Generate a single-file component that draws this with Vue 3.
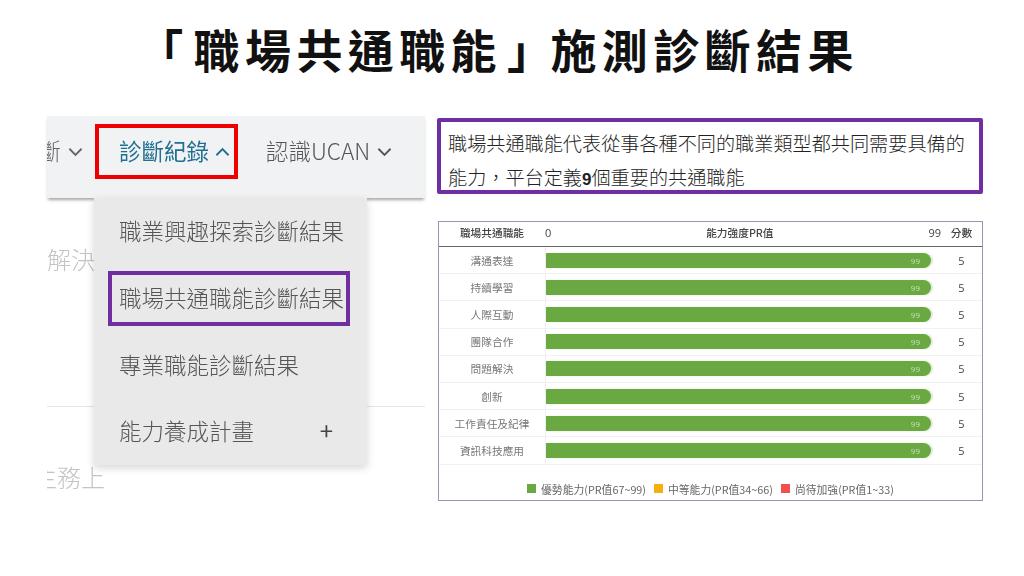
<script setup>
const rows = ['溝通表達', '持續學習', '人際互動', '團隊合作', '問題解決', '創新', '工作責任及紀律', '資訊科技應用']
const menu = ['職業興趣探索診斷結果', '職場共通職能診斷結果', '專業職能診斷結果', '能力養成計畫']
const legend = [
  { color: '#6aa842', text: '優勢能力(PR值67~99)' },
  { color: '#f5b010', text: '中等能力(PR值34~66)' },
  { color: '#f2504f', text: '尚待加強(PR值1~33)' }
]
</script>

<template>
  <div class="slide">
    <h1 class="title"><span class="open">「</span>職場共通職能<span class="close">」</span>施測診斷結果</h1>

    <div class="columns">
      <!-- website screenshot, left -->
      <div class="site">
        <nav class="nav">
          <span class="nav-item cut">斷<svg class="chev" viewBox="0 0 16 10"><path d="M1.500 1.500l6.500 6.500 6.500-6.500" /></svg></span>
          <span class="nav-item active">診斷紀錄<svg class="chev" viewBox="0 0 16 10"><path d="M1.500 8.500l6.500-6.500 6.500 6.500" /></svg></span>
          <span class="nav-item other">認識UCAN<svg class="chev" viewBox="0 0 16 10"><path d="M1.500 1.500l6.500 6.500 6.500-6.500" /></svg></span>
        </nav>

        <div class="behind">
          <div class="behind-top">解決</div>
          <div class="behind-line"></div>
          <div class="behind-bottom"><span>主務上</span></div>
        </div>

        <ul class="dropdown">
          <li v-for="(item, i) in menu" :key="item" class="drop-item" :class="{ marked: i === 1 }">
            <span>{{ item }}</span>
            <span v-if="i === 3" class="plus">+</span>
          </li>
        </ul>
      </div>

      <div class="right">
        <div class="note">
          <p>職場共通職能代表從事各種不同的職業類型都共同需要具備的</p>
          <p>能力，平台定義<b>9</b>個重要的共通職能</p>
        </div>

        <div class="chart">
          <div class="chart-head">
            <span class="c-label strong">職場共通職能</span>
            <span class="c-scale">
              <span class="num">0</span>
              <span class="strong">能力強度PR值</span>
              <span class="num">99</span>
            </span>
            <span class="c-score strong">分數</span>
          </div>
          <div v-for="row in rows" :key="row" class="chart-row">
            <span class="c-label">{{ row }}</span>
            <span class="c-bar"><span class="bar">99</span></span>
            <span class="c-score five">5</span>
          </div>
          <div class="legend">
            <span v-for="item in legend" :key="item.text" class="legend-item">
              <i class="swatch" :style="{ background: item.color }"></i>{{ item.text }}
            </span>
          </div>
        </div>
      </div>
    </div>
  </div>
</template>

<style>
html, body {
  margin: 0;
  background: #fff;
}
</style>

<style scoped>
.slide {
  width: 1024px;
  height: 576px;
  overflow: hidden;
  background: #fff;
  font-family: "Noto Sans CJK TC", "Noto Sans", sans-serif;
}

.title {
  margin: 0;
  height: 116px;
  padding: 16px 28px 0 0;
  box-sizing: border-box;
  text-align: center;
  font-size: 46px;
  line-height: 64px;
  letter-spacing: 5.4px;
  font-weight: 700;
  color: #111;
  white-space: nowrap;
}

.open {
  margin-right: 5px;
}

.close {
  margin-left: 5px;
  letter-spacing: -2.6px;
}

.columns {
  display: flex;
  padding-left: 47px;
  gap: 12px;
}

/* left */
.site {
  position: relative;
  width: 378px;
  height: 380px;
  filter: blur(0.35px);
}

.nav {
  height: 82px;
  background: #f1f2f4;
  box-shadow: 0 3px 3px -1px rgba(0, 0, 0, 0.35);
  display: flex;
  align-items: flex-start;
  font-size: 22.5px;
  font-weight: 300;
  color: #555;
}

.nav-item {
  display: flex;
  align-items: center;
  height: 55px;
  margin-top: 8px;
  padding-bottom: 3px;
  box-sizing: border-box;
  white-space: nowrap;
}

.chev {
  flex: none;
  width: 15px;
  height: 10px;
  margin-left: 7px;
  margin-top: 3px;
  fill: none;
  stroke: currentColor;
  stroke-width: 2;
}

.cut {
  width: 48px;
  flex: none;
  overflow: hidden;
  justify-content: flex-end;
  padding-right: 12px;
  color: #666;
}

.active {
  width: 143px;
  flex: none;
  border: 4px solid #ee0000;
  padding-left: 20px;
  color: #1f6f90;
  font-weight: 400;
}

.active .chev {
  margin-left: 6px;
}

.other {
  margin-left: 28px;
  color: #555;
}

.behind {
  color: #c4c4c4;
  font-size: 24px;
  font-weight: 300;
  overflow: hidden;
  height: 298px;
}

.behind-top {
  margin-top: 46px;
  line-height: 30px;
}

.behind-line {
  height: 1px;
  margin-top: 132px;
  background: #e4e4e4;
}

.behind-bottom {
  margin-top: 55px;
  line-height: 30px;
}

.behind-bottom span {
  margin-left: -14px;
  display: block;
}

.dropdown {
  position: absolute;
  left: 47px;
  top: 82px;
  width: 273px;
  height: 267px;
  margin: 0;
  padding: 0;
  list-style: none;
  background: #e9e9e9;
  box-shadow: 0 3px 8px rgba(0, 0, 0, 0.16);
  font-size: 22.5px;
  font-weight: 300;
  color: #555;
  display: flex;
  flex-direction: column;
}

.drop-item {
  height: 66px;
  display: flex;
  align-items: center;
  padding: 0 34px 3px 25px;
  justify-content: space-between;
  white-space: nowrap;
  box-sizing: border-box;
}

.marked {
  height: 55px;
  margin: 7px 17px 6px 14px;
  padding: 0 0 4px 7px;
  border: 4px solid #6f2fa3;
}

.plus {
  font-size: 24px;
  font-weight: 400;
  color: #444;
}

/* right */
.right {
  width: 546px;
  padding-top: 2px;
}

.note {
  height: 76px;
  box-sizing: border-box;
  border: 4px solid #6f2fa3;
  border-radius: 2px;
  padding: 4px 7px;
  font-size: 19.15px;
  line-height: 34px;
  color: #222;
  white-space: nowrap;
}

.note p {
  margin: 0;
  font-weight: 300;
}

.note b {
  font-family: "Liberation Sans", sans-serif;
  font-weight: 700;
  font-size: 17px;
}

.chart {
  margin-top: 27px;
  margin-left: 1px;
  width: 545px;
  height: 280px;
  box-sizing: border-box;
  border: 1px solid #a48fb5;
  font-size: 10.7px;
  color: #777;
  filter: blur(0.3px);
}

.chart-head {
  height: 25px;
  padding-bottom: 3px;
  display: flex;
  align-items: center;
  border-bottom: 1px solid #666;
  box-sizing: border-box;
  color: #444;
}

.strong {
  font-weight: 500;
}

.c-label {
  width: 106px;
  flex: none;
  text-align: center;
}

.c-scale {
  flex: none;
  width: 396px;
  display: flex;
  justify-content: space-between;
  box-sizing: border-box;
  align-items: center;
  padding-left: 0;
}

.num {
  font-size: 11px;
  font-family: "Open Sans", sans-serif;
}

.c-score {
  flex: 1;
  text-align: center;
}

.chart-row {
  height: 27.2px;
  display: flex;
  align-items: center;
  border-bottom: 1px solid #f1f1f1;
  box-sizing: border-box;
}

.c-bar {
  width: 390px;
  flex: none;
  align-self: stretch;
  display: flex;
  align-items: center;
  border-left: 1px solid #eee;
  box-sizing: border-box;
}

.bar {
  width: 385px;
  height: 15px;
  background: #6aa842;
  border-radius: 0 8px 8px 0;
  box-shadow: 2px 0 2px #dcebd2;
  color: #c9e0b8;
  font-size: 8px;
  line-height: 15px;
  text-align: right;
  padding-right: 11px;
  box-sizing: border-box;
  font-family: "Open Sans", sans-serif;
}

.five {
  font-size: 11px;
  color: #444;
  padding-left: 6px;
  font-family: "Open Sans", sans-serif;
}

.legend {
  display: flex;
  justify-content: center;
  gap: 8px;
  margin-top: 17px;
  font-size: 10.8px;
  line-height: 14px;
  color: #666;
}

.legend-item {
  display: flex;
  align-items: center;
}

.swatch {
  width: 9px;
  height: 9px;
  margin-right: 5px;
}
</style>
